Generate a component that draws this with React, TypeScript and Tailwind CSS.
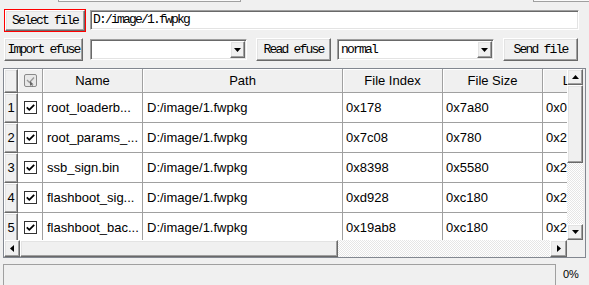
import React from 'react';

const raised =
  'bg-[#f0f0f0] border border-t-white border-l-white border-r-[#696969] border-b-[#696969] shadow-[inset_-1px_-1px_0_#a0a0a0,inset_1px_1px_0_#e3e3e3]';
const sunken =
  'bg-white border border-t-[#a0a0a0] border-l-[#a0a0a0] border-r-white border-b-white shadow-[inset_1px_1px_0_#696969,inset_-1px_-1px_0_#e3e3e3]';
const mono = "font-['Liberation_Mono',monospace] text-[13px] tracking-[-1.8px] text-black";
const checker =
  'bg-[repeating-conic-gradient(#ffffff_0_25%,#e6e6e6_0_50%)] bg-[length:2px_2px]';

const rows = [
  { name: 'root_loaderb...', index: '0x178', size: '0x7a80', load: '0x0' },
  { name: 'root_params_...', index: '0x7c08', size: '0x780', load: '0x2' },
  { name: 'ssb_sign.bin', index: '0x8398', size: '0x5580', load: '0x2' },
  { name: 'flashboot_sig...', index: '0xd928', size: '0xc180', load: '0x2' },
  { name: 'flashboot_bac...', index: '0x19ab8', size: '0xc180', load: '0x2' },
];

function Tri({ dir }: { dir: 'up' | 'down' | 'left' | 'right' }) {
  const d = {
    down: 'M0 0H7L3.5 4Z',
    up: 'M0 4H7L3.5 0Z',
    left: 'M4 0V7L0 3.5Z',
    right: 'M0 0V7L4 3.5Z',
  }[dir];
  const vertical = dir === 'up' || dir === 'down';
  return (
    <svg width={vertical ? 7 : 4} height={vertical ? 4 : 7} viewBox={vertical ? '0 0 7 4' : '0 0 4 7'}>
      <path d={d} fill="#000" />
    </svg>
  );
}

function Check() {
  return (
    <svg width="13" height="13" viewBox="0 0 13 13">
      <rect x="0.5" y="0.5" width="12" height="12" fill="#fff" stroke="#333" />
      <path d="M2.8 6.3 L5.3 8.8 L10.2 3.8" stroke="#000" strokeWidth="1.8" fill="none" />
    </svg>
  );
}

function HeaderCheck() {
  return (
    <svg width="13" height="13" viewBox="0 0 13 13">
      <rect x="0.5" y="0.5" width="12" height="12" rx="1.5" fill="#e8e8e8" stroke="#8a8a8a" />
      <path d="M3 6 L5.5 8.5 L10 3.5" stroke="#9a9a9a" strokeWidth="1.4" fill="none" />
      <path d="M6 7 L6 12 L7.3 10.8 L8.3 12.6 L9 12.2 L8 10.5 L9.6 10.4Z" fill="#666" />
    </svg>
  );
}

function Combo({ value, className }: { value: string; className: string }) {
  return (
    <div className={`${sunken} ${className} h-[21px] mt-[1px] flex items-center pr-[1px]`}>
      <span className={`${mono} flex-1 pl-[3px] leading-none`}>{value}</span>
      <div className={`${raised} w-[15px] h-[17px] flex items-center justify-center`}>
        <Tri dir="down" />
      </div>
    </div>
  );
}

function Btn({ label, className }: { label: string; className: string }) {
  return (
    <div className={`${raised} ${className} h-[23px] flex items-center justify-center ${mono}`}>
      {label}
    </div>
  );
}

const cell = 'shrink-0 border-r border-b border-[#a0a0a0] flex items-center';
const headCell = `${cell} justify-center bg-[#f0f0f0] shadow-[inset_1px_1px_0_#ffffff]`;

export default function App() {
  return (
    <div className="w-[589px] h-[285px] bg-[#f0f0f0] overflow-hidden flex flex-col font-['Liberation_Sans',Arial,sans-serif] text-[13px] text-black">
      {/* bottoms of controls scrolled above */}
      <div className="flex h-[3px] shrink-0">
        <div className="w-[58px]" />
        <div className="w-[183px] h-[2px] bg-[#fafafa] border-x border-b border-[#a0a0a0]" />
        <div className="flex-1" />
        <div className="w-[56px] h-[2px] bg-[#fafafa] border-l border-b border-[#a0a0a0]" />
      </div>

      {/* file row */}
      <div className="flex items-start mt-[6px] h-[23px] shrink-0">
        <div className="ml-[4px] w-[82px] h-[23px] border border-[#ff0000]">
          <div className={`${raised} w-full h-full flex items-center justify-center ${mono}`}>Select file</div>
        </div>
        <div className={`${sunken} ml-[4px] mt-[1px] w-[489px] h-[20px] flex items-center pl-[2px] ${mono}`}>
          D:/image/1.fwpkg
        </div>
      </div>

      {/* efuse row */}
      <div className="flex items-start mt-[6px] h-[23px] shrink-0">
        <Btn label="Import efuse" className="ml-[4px] w-[79px]" />
        <Combo value="" className="ml-[7px] w-[157px]" />
        <Btn label="Read efuse" className="ml-[9px] w-[75px]" />
        <Combo value="normal" className="ml-[6px] w-[157px]" />
        <Btn label="Send file" className="ml-[9px] w-[75px]" />
      </div>

      {/* file table */}
      <div className="mt-[7px] ml-[3px] w-[583px] h-[190px] shrink-0 border border-[#828790] flex">
        <div className="w-[563px] flex flex-col">
          <div className="h-[171px] overflow-hidden bg-white">
            <div className="flex h-[24px]">
              <div className={`${raised} w-[14px] h-[24px] shrink-0`} />
              <div className={`${headCell} w-[25px] h-[24px]`}>
                <HeaderCheck />
              </div>
              <div className={`${headCell} w-[100px] h-[24px]`}>Name</div>
              <div className={`${headCell} w-[200px] h-[24px]`}>Path</div>
              <div className={`${headCell} w-[100px] h-[24px]`}>File Index</div>
              <div className={`${headCell} w-[100px] h-[24px]`}>File Size</div>
              <div className={`${headCell} w-[100px] h-[24px]`}>Load Addr</div>
            </div>
            {rows.map((r, i) => (
              <div key={i} className="flex h-[30px]">
                <div className={`${raised} w-[14px] h-[30px] shrink-0 flex items-center justify-center`}>{i + 1}</div>
                <div className={`${cell} w-[25px] h-[30px] justify-center`}>
                  <Check />
                </div>
                <div className={`${cell} w-[100px] h-[30px] pl-[4px] whitespace-nowrap overflow-hidden`}>{r.name}</div>
                <div className={`${cell} w-[200px] h-[30px] pl-[4px]`}>D:/image/1.fwpkg</div>
                <div className={`${cell} w-[100px] h-[30px] pl-[3px]`}>{r.index}</div>
                <div className={`${cell} w-[100px] h-[30px] pl-[3px]`}>{r.size}</div>
                <div className={`${cell} w-[100px] h-[30px] pl-[3px]`}>{r.load}</div>
              </div>
            ))}
          </div>
          {/* horizontal scrollbar */}
          <div className="h-[17px] flex">
            <div className={`${raised} w-[16px] h-full flex items-center justify-center`}>
              <Tri dir="left" />
            </div>
            <div className={`${raised} w-[318px] h-full`} />
            <div className={`${checker} flex-1 h-full`} />
            <div className={`${raised} w-[17px] h-full flex items-center justify-center`}>
              <Tri dir="right" />
            </div>
          </div>
        </div>
        {/* vertical scrollbar */}
        <div className="w-[16px] flex flex-col">
          <div className={`${raised} h-[16px] flex items-center justify-center`}>
            <Tri dir="up" />
          </div>
          <div className={`${raised} h-[78px]`} />
          <div className={`${checker} h-[61px]`} />
          <div className={`${raised} h-[16px] flex items-center justify-center`}>
            <Tri dir="down" />
          </div>
          <div className="flex-1 bg-[#f0f0f0]" />
        </div>
        <div className="flex-1 bg-[#f0f0f0]" />
      </div>

      {/* status bar */}
      <div className="mt-[6px] h-[21px] flex shrink-0">
        <div className="ml-[3px] w-[553px] h-full border-t border-l border-r border-[#a0a0a0]" />
        <div className="pl-[7px] flex items-center text-[11px]">0%</div>
      </div>
    </div>
  );
}
